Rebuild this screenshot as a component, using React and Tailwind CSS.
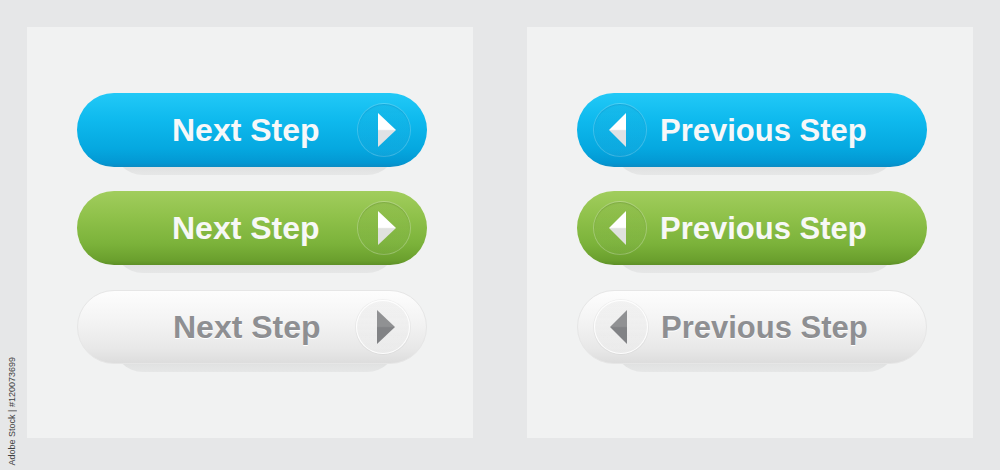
import React from "react";

const themes = {
  blue: {
    face: "bg-[linear-gradient(to_bottom,#22c9f7_0%,#0fbaee_35%,#05a8e0_75%,#0398d3_94%,#0b8cc4_100%)]",
    text: "text-[#f7f8f9]",
    ring: "border-[rgba(255,255,255,0.2)] bg-[linear-gradient(to_bottom,rgba(0,60,110,0.05),rgba(255,255,255,0.04))] shadow-[inset_0_1px_1px_rgba(0,70,120,0.15)]",
    top: "#ffffff",
    bottom: "#dfe2e5",
  },
  green: {
    face: "bg-[linear-gradient(to_bottom,#a1cd5d_0%,#8fc14a_35%,#7bb23a_72%,#6a9f2d_94%,#5e9027_100%)]",
    text: "text-[#f7f8f6]",
    ring: "border-[rgba(255,255,255,0.25)] bg-[linear-gradient(to_bottom,rgba(40,80,0,0.06),rgba(255,255,255,0.04))] shadow-[inset_0_1px_1px_rgba(40,80,0,0.18)]",
    top: "#ffffff",
    bottom: "#e0e2de",
  },
  light: {
    face: "bg-[linear-gradient(to_bottom,#fdfdfd_0%,#f4f4f4_40%,#e8e8e8_80%,#dddddd_100%)] border border-[#e6e6e6]",
    text: "text-[#8e8f92] [text-shadow:0_1px_0_#ffffff]",
    ring: "border-[rgba(255,255,255,0.9)] bg-[linear-gradient(to_bottom,rgba(0,0,0,0.03),rgba(255,255,255,0.2))] shadow-[0_0_0_1px_rgba(0,0,0,0.04)]",
    top: "#909193",
    bottom: "#818285",
  },
};

function Arrow({ dir, tone, id }) {
  const t = themes[tone];
  const pts = dir === "right" ? "21,10 39,27 21,44" : "33,10 16,27 33,44";
  return (
    <div className={`w-[54px] h-[54px] rounded-full border shrink-0 ${t.ring}`}>
      <svg width="52" height="52" viewBox="1 1 52 52" className="block">
        <defs>
          <linearGradient id={id} x1="0" y1="0" x2="0" y2="1">
            <stop offset="0" stopColor={t.top} />
            <stop offset="0.48" stopColor={t.top} />
            <stop offset="0.52" stopColor={t.bottom} />
            <stop offset="1" stopColor={t.bottom} />
          </linearGradient>
        </defs>
        <polygon points={pts} fill={`url(#${id})`} />
      </svg>
    </div>
  );
}

function StepButton({ dir, tone, label, id }) {
  const t = themes[tone];
  const next = dir === "right";
  return (
    <div className="relative w-[350px] h-[82px]">
      {/* base plate under the pill */}
      <div className="absolute left-[36px] right-[30px] top-[20px] h-[62px] rounded-b-[30px] bg-[linear-gradient(to_bottom,#c8c9ca,#d9dada_70%,#e6e7e7)]" />
      <div
        className={`relative h-[74px] rounded-full flex items-center ${t.face} ${
          next ? "pl-[95px] pr-[16px] justify-between" : "pl-[16px] gap-[13px]"
        }`}
      >
        {!next && <Arrow dir={dir} tone={tone} id={id} />}
        <span
          className={`leading-none font-bold whitespace-nowrap ${next ? "text-[32px]" : "text-[31px]"} ${t.text}`}
          style={{ fontFamily: '"Liberation Sans", Arial, sans-serif' }}
        >
          {label}
        </span>
        {next && <Arrow dir={dir} tone={tone} id={id} />}
      </div>
    </div>
  );
}

function Panel({ dir, label, prefix }) {
  return (
    <div className="w-[446px] h-[411px] bg-[#f1f2f2] pl-[50px] pt-[66px] flex flex-col gap-[16px]">
      <StepButton dir={dir} tone="blue" label={label} id={`${prefix}-b`} />
      <StepButton dir={dir} tone="green" label={label} id={`${prefix}-g`} />
      <div className="mt-[1px]">
        <StepButton dir={dir} tone="light" label={label} id={`${prefix}-l`} />
      </div>
    </div>
  );
}

export default function App() {
  return (
    <div className="relative w-[1000px] h-[470px] bg-[#e6e7e8] p-[27px] flex gap-[54px] overflow-hidden">
      <Panel dir="right" label="Next Step" prefix="nx" />
      <Panel dir="left" label="Previous Step" prefix="pv" />
      <div
        className="absolute left-[8px] top-[357px] text-[9px] leading-none text-[#3f3f41] [writing-mode:vertical-rl] rotate-180 whitespace-nowrap"
        style={{ fontFamily: '"Liberation Sans", Arial, sans-serif' }}
      >
        Adobe Stock | #120073699
      </div>
    </div>
  );
}
